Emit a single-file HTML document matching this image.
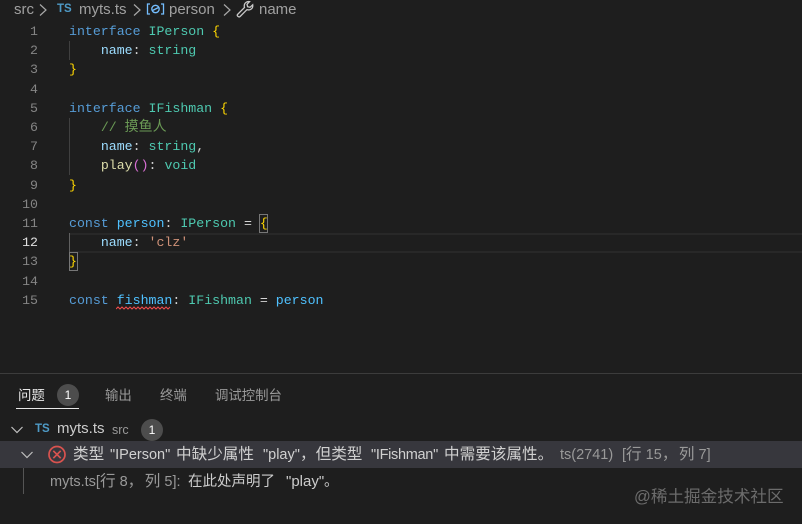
<!DOCTYPE html>
<html><head><meta charset="utf-8"><style>
html,body{margin:0;padding:0;background:#1e1e1e}
#r{position:relative;width:802px;height:524px;overflow:hidden;background:#1e1e1e;font-family:"Liberation Sans","Noto Sans CJK SC",sans-serif;color:#ccc;filter:blur(.3px)}
.a{position:absolute;white-space:pre}
.n{position:absolute;left:0;width:38px;text-align:right;font:13.25px/19.2px "Liberation Mono",monospace;color:#858585}
.l{position:absolute;left:69px;font:13.25px/19.2px "Liberation Mono","Noto Sans CJK SC",monospace;white-space:pre;color:#d4d4d4}
.k{color:#569cd6}.t{color:#4ec9b0}.v{color:#9cdcfe}.y{color:#ffd700}.c{color:#6a9955}.s{color:#ce9178}.p{color:#da70d6}.f{color:#dcdcaa}.w{color:#4fc1ff}
.b{position:absolute;background:#4d4d4d;border-radius:50%;width:22px;height:22px;color:#fff;font-size:12px;line-height:22px;text-align:center}
.g{position:absolute;width:1px;background:#404040}
.bc{position:absolute;white-space:pre;top:1px;font-size:15px;line-height:18px;color:#a0a0a0}
.tab{position:absolute;white-space:pre;top:387px;font-size:13.4px;line-height:18px;color:#9a9a9a}
.m{position:absolute;white-space:pre;top:446px;font-size:14.5px;line-height:18px;color:#d0d0d0}
.z{font-size:15.6px}
.q{font-size:15.6px;letter-spacing:1.5px}
.m2{position:absolute;white-space:pre;top:473px;font-size:14.5px;line-height:18px;color:#ccc}
</style></head><body><div id="r">
<div class="bc" style="left:14px">src</div>
<svg class="a" style="left:38px;top:3px" width="12" height="14"><path d="M2 1.500l6 5.500-6 5.500" fill="none" stroke="#a8a8a8" stroke-width="1.200"/></svg>
<div class="a" style="left:57px;top:1px;font-size:11.500px;font-weight:bold;line-height:16px;color:#4e9ac6">TS</div>
<div class="bc" style="left:79px">myts.ts</div>
<svg class="a" style="left:132px;top:3px" width="12" height="14"><path d="M2 1.500l6 5.500-6 5.500" fill="none" stroke="#a8a8a8" stroke-width="1.200"/></svg>
<svg class="a" style="left:146px;top:2px" width="19" height="14" fill="none" stroke="#75beff" stroke-width="1.300"><path d="M4 2H1.500v10H4M15 2h2.500v10H15"/><circle cx="9.500" cy="7" r="3.700"/><path d="M6.500 8.500l6-3"/></svg>
<div class="bc" style="left:169px">person</div>
<svg class="a" style="left:222px;top:3px" width="12" height="14"><path d="M2 1.500l6 5.500-6 5.500" fill="none" stroke="#a8a8a8" stroke-width="1.200"/></svg>
<svg class="a" style="left:236px;top:0" width="19" height="18" fill="none" stroke="#c8c8c8" stroke-width="1.300"><path d="M1.500 14.500l7-7c-.8-2.600.3-5.500 4-6l1 .1-2.500 2.700.6 2.400 2.400.6 2.700-2.500c.5 3.700-2.400 6-5.700 4.800l-7 7c-1.300 1-3.400-.9-2.500-2.100z"/></svg>
<div class="bc" style="left:259px">name</div>

<div style="position:absolute;left:69px;right:0;top:233px;height:16px;border-top:2px solid #282828;border-bottom:2px solid #282828"></div>
<div class="g" style="left:69px;top:41px;height:19px"></div>
<div class="g" style="left:69px;top:118px;height:57px"></div>
<div class="g" style="left:69px;top:233px;height:19px;background:#606060"></div>
<div style="position:absolute;left:259px;top:214px;width:7px;height:17px;border:1px solid #777"></div>
<div style="position:absolute;left:69px;top:252px;width:7px;height:17px;border:1px solid #777"></div>

<div class="n" style="top:22px">1</div><div class="n" style="top:41px">2</div><div class="n" style="top:60px">3</div><div class="n" style="top:80px">4</div><div class="n" style="top:99px">5</div><div class="n" style="top:118px">6</div><div class="n" style="top:137px">7</div><div class="n" style="top:156px">8</div><div class="n" style="top:176px">9</div><div class="n" style="top:195px">10</div><div class="n" style="top:214px">11</div><div class="n" style="top:233px;color:#e0e0e0">12</div><div class="n" style="top:252px">13</div><div class="n" style="top:272px">14</div><div class="n" style="top:291px">15</div>

<div class="l" style="top:22px"><span class="k">interface</span> <span class="t">IPerson</span> <span class="y">{</span></div>
<div class="l" style="top:41px">    <span class="v">name</span>: <span class="t">string</span></div>
<div class="l" style="top:60px"><span class="y">}</span></div>
<div class="l" style="top:99px"><span class="k">interface</span> <span class="t">IFishman</span> <span class="y">{</span></div>
<div class="l" style="top:118px">    <span class="c">// <span style="font-size:14px">摸鱼人</span></span></div>
<div class="l" style="top:137px">    <span class="v">name</span>: <span class="t">string</span>,</div>
<div class="l" style="top:156px">    <span class="f">play</span><span class="p">()</span>: <span class="t">void</span></div>
<div class="l" style="top:176px"><span class="y">}</span></div>
<div class="l" style="top:214px"><span class="k">const</span> <span class="w">person</span>: <span class="t">IPerson</span> = <span class="y">{</span></div>
<div class="l" style="top:233px">    <span class="v">name</span>: <span class="s">'clz'</span></div>
<div class="l" style="top:252px"><span class="y">}</span></div>
<div class="l" style="top:291px"><span class="k">const</span> <span class="w">fishman</span>: <span class="t">IFishman</span> = <span class="w">person</span></div>
<svg class="a" style="left:116px;top:306px" width="57" height="5"><path d="M0 3l2-2 2 2 2-2 2 2 2-2 2 2 2-2 2 2 2-2 2 2 2-2 2 2 2-2 2 2 2-2 2 2 2-2 2 2 2-2 2 2 2-2 2 2 2-2 2 2 2-2 2 2 2-2" fill="none" stroke="#f14c4c" stroke-width="1"/></svg>

<div style="position:absolute;left:0;right:0;top:373px;height:1px;background:#3c3c3c"></div>
<div class="tab" style="left:18px;color:#e7e7e7">问题</div>
<div style="position:absolute;left:16px;top:408px;width:63px;height:1px;background:#e7e7e7"></div>
<div class="b" style="left:57px;top:384px">1</div>
<div class="tab" style="left:105px">输出</div>
<div class="tab" style="left:160px">终端</div>
<div class="tab" style="left:215px">调试控制台</div>

<svg class="a" style="left:10px;top:424px" width="14" height="12"><path d="M1.500 3l5.500 5.500L12.500 3" fill="none" stroke="#c0c0c0" stroke-width="1.200"/></svg>
<div class="a" style="left:35px;top:421px;font-size:11.500px;font-weight:bold;line-height:16px;color:#4e9ac6">TS</div>
<div class="a" style="left:57px;top:420px;font-size:15px;line-height:18px;color:#ccc">myts.ts</div>
<div class="a" style="left:112px;top:421px;font-size:12.500px;line-height:18px;color:#9a9a9a">src</div>
<div class="b" style="left:141px;top:419px">1</div>

<div style="position:absolute;left:0;right:0;top:441px;height:27px;background:#37373d"></div>
<svg class="a" style="left:20px;top:449px" width="14" height="12"><path d="M1.500 3l5.500 5.500L12.500 3" fill="none" stroke="#c0c0c0" stroke-width="1.200"/></svg>
<svg class="a" style="left:47px;top:445px" width="20" height="20" fill="none" stroke="#d9534f" stroke-width="1.700"><circle cx="10" cy="9.500" r="8"/><path d="M6.300 5.800l7.400 7.400M13.700 5.800l-7.400 7.400"/></svg>
<div class="m z" style="left:73px">类型</div>
<div class="m" style="left:110px">"IPerson"</div>
<div class="m z" style="left:176px">中缺少属性</div>
<div class="m" style="left:263px">"play"</div>
<div class="m z" style="left:300px">，但类型</div>
<div class="m" style="left:371px;letter-spacing:-.3px">"IFishman"</div>
<div class="m z" style="left:444px">中需要该属性。</div>
<div class="m" style="left:560px;color:#999">ts(2741)</div>
<div class="m" style="left:622px;color:#999">[<span class="z">行</span> 15<span class="q">，</span><span class="z">列</span> 7]</div>

<div class="g" style="left:23px;top:468px;height:26px;background:#555"></div>
<div class="m2" style="left:50px;color:#999">myts.ts[<span class="z">行</span> 8<span class="q">，</span><span class="z">列</span> 5]:</div>
<div class="m2 z" style="left:188px">在此处声明了</div>
<div class="m2" style="left:286px;font-size:15px">"play"</div>
<div class="m2 z" style="left:324px">。</div>
<div class="a" style="left:634px;top:487px;font-size:16.6px;line-height:20px;color:#6c6c6c">@稀土掘金技术社区</div>
</div></body></html>
